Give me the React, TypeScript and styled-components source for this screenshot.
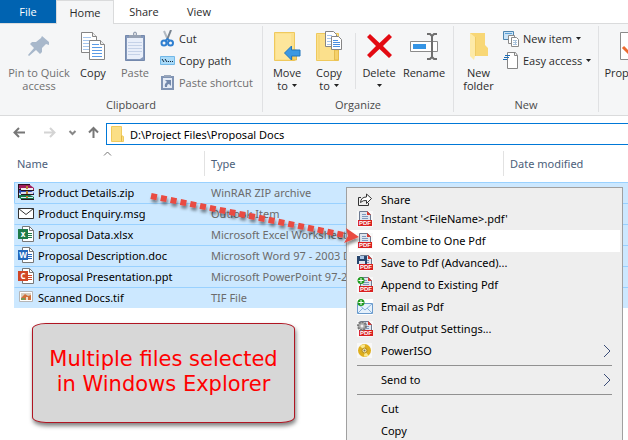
import React from "react";
import styled, { createGlobalStyle, css } from "styled-components";

const GlobalStyle = createGlobalStyle`
  *, *::before, *::after { box-sizing: border-box; }
  html, body { margin: 0; height: 100%; background: #fff; }
  #root { height: 100%; }
  button, input { font: inherit; color: inherit; }
  svg { display: block; flex: none; }
`;

const listFont = `"Noto Sans", "Open Sans", sans-serif`;

const Window = styled.div`
  position: relative;
  min-height: 100%;
  height: 100vh;
  overflow: hidden;
  display: flex;
  flex-direction: column;
  background: #fff;
  color: #000;
  font-family: "Open Sans", "Noto Sans", sans-serif;
  font-size: 11px;
  line-height: 13px;
`;

/* ---------- tabs ---------- */

const TabBar = styled.nav`
  display: flex;
  height: 24px;
  flex: none;
  border-bottom: 1px solid #dadbdc;
`;

const Tab = styled.button<{ $kind?: "file" | "active"; $width: number }>`
  width: ${(p) => p.$width}px;
  height: 23px;
  padding: 0;
  border: 0;
  background: transparent;
  color: #2b2b2b;
  ${(p) => p.$kind === "file" && css`
    background: #0063b1;
    color: #fff;
  `}
  ${(p) => p.$kind === "active" && css`
    height: 24px;
    padding-bottom: 1px;
    background: #f5f6f7;
    border: 1px solid #dadbdc;
    border-bottom: 0;
  `}
`;

/* ---------- ribbon ---------- */

const Ribbon = styled.div`
  display: flex;
  flex: none;
  height: 92px;
  overflow: hidden;
  padding: 2px 0 3px;
  background: #f5f6f7;
  border-bottom: 1px solid #dadbdc;
  color: #2b2b2b;
`;

const Group = styled.section<{ $width: number }>`
  display: flex;
  flex-direction: column;
  flex: none;
  width: ${(p) => p.$width}px;
  border-right: 1px solid #e0e1e3;
`;

const GroupTools = styled.div<{ $indent?: number }>`
  display: flex;
  flex: 1;
  padding-left: ${(p) => p.$indent ?? 0}px;
`;

const GroupLabel = styled.div`
  height: 14px;
  text-align: center;
  color: #4a4a4a;
`;

const BigButton = styled.button<{ $width: number }>`
  display: flex;
  flex-direction: column;
  align-items: center;
  flex: none;
  width: ${(p) => p.$width}px;
  padding: 5px 0 0;
  border: 0;
  background: transparent;
  white-space: nowrap;
  &:disabled { color: #6f6f6f; }
`;

const BigIcon = styled.span`
  display: flex;
  align-items: center;
  justify-content: center;
  height: 30px;
  margin-bottom: 5px;
`;

const Line = styled.span`
  display: flex;
  align-items: center;
  justify-content: center;
  gap: 4px;
  height: 13px;
`;

const ToolDivider = styled.span`
  width: 1px;
  height: 56px;
  margin: 7px 0 0 5px;
  background: #e0e1e3;
`;

const SmallColumn = styled.div<{ $indent?: number }>`
  display: flex;
  flex-direction: column;
  align-items: flex-start;
  padding: 2px 0 0 ${(p) => p.$indent ?? 0}px;
`;

const SmallButton = styled.button`
  display: flex;
  align-items: center;
  gap: 4px;
  height: 22px;
  padding: 0 0 1px;
  border: 0;
  background: transparent;
  white-space: nowrap;
  &:disabled { color: #6f6f6f; }
`;

const Down = () => (
  <svg width="5" height="3" viewBox="0 0 5 3"><path d="M0 0h5L2.500 3z" fill="#222" /></svg>
);

const PinIcon = () => (
  <svg width="22" height="22" viewBox="0 0 22 22">
    <path d="M14 1l7 6v3l-3-1-4 4v4l-2 2-4-4-7 6-1-1 6-7-4-4 2-2h4l5-4z" fill="#a8b8cb" />
  </svg>
);

const SheetsIcon = () => (
  <svg width="26" height="30" viewBox="0 0 26 30">
    <path d="M1.500 1.500h11l4 4v16h-15z" fill="#fff" stroke="#858585" />
    <path d="M12.500 1.500v4h4" fill="#eee" stroke="#858585" />
    <path d="M3 6.500h8M3 9.500h11M3 12.500h7M3 15.500h7M3 18.500h7" stroke="#a5c6ee" />
    <path d="M9.500 9.500h11l4 4v15h-15z" fill="#fff" stroke="#858585" />
    <path d="M20.500 9.500v4h4" fill="#eee" stroke="#858585" />
    <path d="M12 13.500h7M12 16.500h10M12 19.500h10M12 22.500h10M12 25.500h10" stroke="#5a9be6" />
  </svg>
);

const ClipboardIcon = () => (
  <svg width="20" height="30" viewBox="0 0 20 30">
    <path d="M.5 4.500h19v25H.5z" fill="#8599bb" stroke="#7489ad" />
    <path d="M2 7h16v19l-3 2H2z" fill="#e9effa" />
    <path d="M3 11.500h14M3 14.500h14M3 17.500h14M3 20.500h14M3 23.500h12" stroke="#c5d2e8" />
    <path d="M4 7V4h4V2q2-3 4 0v2h4v3z" fill="#97a2b3" />
    <circle cx="10" cy="3" r="1" fill="#eee" />
  </svg>
);

const CutIcon = () => (
  <svg width="15" height="17" viewBox="0 0 15 17" fill="none">
    <path d="M4 1l4 9" stroke="#b3bac2" strokeWidth="2" />
    <path d="M11 0L7 10" stroke="#77828e" strokeWidth="2" />
    <ellipse cx="4" cy="13" rx="2.500" ry="2.500" stroke="#2f7fd0" strokeWidth="2" />
    <ellipse cx="10.500" cy="13" rx="2.500" ry="2.500" stroke="#2f7fd0" strokeWidth="2" />
    <path d="M5 11l2.500-2L10 11" stroke="#2f7fd0" strokeWidth="2" />
  </svg>
);

const CopyPathIcon = () => (
  <svg width="15" height="9" viewBox="0 0 15 9">
    <path d="M.5.5h14v8H.5z" fill="#a9daf8" stroke="#72b8e8" />
    <path d="M2 3l2 3M5 3l2 3" stroke="#14283c" />
    <path d="M8 5h1v1H8zM10 5h1v1h-1zM12 5h1v1h-1z" fill="#14283c" />
  </svg>
);

const PasteShortcutIcon = () => (
  <svg width="15" height="17" viewBox="0 0 15 17">
    <path d="M2 3h11v12H2z" fill="#e4ebf6" stroke="#8094b4" strokeWidth="2" />
    <path d="M4 3V1h7v2z" fill="#98a6bb" />
    <path d="M5 6h6v6L9 10q-2 0-2 3H5q-1-3 2-5z" fill="#7389ac" />
  </svg>
);

const MoveIcon = () => (
  <svg width="28" height="29" viewBox="0 0 28 29">
    <path d="M1.500.5h20v28h-20z" fill="#fbe08c" stroke="#efc95d" />
    <path d="M3 2h15v25H3z" fill="#fde69b" />
    <path d="M19.500 18v10h4V18z" fill="#f5d06a" stroke="#e5bb4c" />
    <path d="M11.500 21l7-7v4h8.500v6h-8.500v4z" fill="#3b98e3" stroke="#2377bd" />
  </svg>
);

const CopyToIcon = () => (
  <svg width="28" height="31" viewBox="0 0 28 31">
    <path d="M1.500 2.500h22v27h-22z" fill="#fbe08c" stroke="#efc95d" />
    <path d="M4 4v24" stroke="#f3d271" />
    <path d="M19.500 19v10h4V19z" fill="#f5d06a" stroke="#e5bb4c" />
    <path d="M10.500.5h8l3 3v12h-11z" fill="#fff" stroke="#858585" />
    <path d="M12 4.500h5M12 7.500h5M12 10.500h5M12 13.500h5" stroke="#a5c6ee" />
    <path d="M16.500 5.500h7l3 3v10h-10z" fill="#fff" stroke="#858585" />
    <path d="M18 9.500h5M18 11.500h7M18 13.500h7M18 15.500h7" stroke="#4a8fe0" />
  </svg>
);

const DeleteIcon = () => (
  <svg width="25" height="26" viewBox="0 0 25 26">
    <path d="M3 1l9.500 9L22 1l3 3-9 9 9 9-3 3-9.500-9L3 25l-3-3 9-9-9-9z" fill="#e30a12" />
  </svg>
);

const RenameIcon = () => (
  <svg width="28" height="27" viewBox="0 0 28 27">
    <path d="M.5 8.500h27v10H.5z" fill="#fff" stroke="#8b8b8b" />
    <path d="M3 11h13v5H3z" fill="#3594e4" />
    <path d="M17 1h3l2 2 2-2h3M17 26h3l2-2 2 2h3M22 3v21" fill="none" stroke="#6f6f6f" strokeWidth="2" />
  </svg>
);

const NewFolderIcon = () => (
  <svg width="20" height="28" viewBox="0 0 20 28">
    <path d="M1 1h15v12l3 3v8H1z" fill="#f8d776" />
    <path d="M1 1l5 4v19l-1 4-4-4z" fill="#fdeaa8" />
    <path d="M6.500 5v19" stroke="#efcb66" />
  </svg>
);

const NewItemIcon = () => (
  <svg width="16" height="16" viewBox="0 0 16 16">
    <path d="M.5.5h10v8H.5z" fill="#cbe4f7" stroke="#4f86b0" />
    <path d="M2 2.500h7" stroke="#5ba0d6" />
    <path d="M5.500 4.500h6v8h-6z" fill="#fff" stroke="#8a8a8a" />
    <path d="M8.500 6.500h5l2 2v7h-7z" fill="#fff" stroke="#8a8a8a" />
    <path d="M10 9.500h4M10 11.500h4M10 13.500h4M12.500 9v5" stroke="#a9c3dc" />
  </svg>
);

const EasyAccessIcon = () => (
  <svg width="16" height="17" viewBox="0 0 16 17">
    <path d="M4.500.5h8l2 3v13h-10z" fill="#fff" stroke="#858585" />
    <path d="M11.500.5v3h3" fill="none" stroke="#858585" />
    <path d="M2 3.500h5M1 5.500h5M0 7.500h4" stroke="#1d6db6" />
  </svg>
);

const PropertiesIcon = () => (
  <svg width="23" height="28" viewBox="0 0 23 28">
    <path d="M.5.5h16l6 6v21H.5z" fill="#fff" stroke="#8a8a8a" />
    <path d="M3 15l6 6L19 8" fill="none" stroke="#ed6b2f" strokeWidth="3" />
  </svg>
);

/* ---------- address bar ---------- */

const AddressRow = styled.div`
  display: flex;
  flex: none;
  padding-top: 7px;
  height: 29px;
`;

const NavButton = styled.button<{ $width: number }>`
  display: flex;
  align-items: center;
  justify-content: center;
  width: ${(p) => p.$width}px;
  height: 18px;
  padding: 0;
  border: 0;
  background: transparent;
`;

const NavButtons = styled.div`
  display: flex;
  width: 106px;
  padding-left: 4px;
  flex: none;
`;

const AddressBox = styled.label`
  display: flex;
  align-items: center;
  gap: 6px;
  flex: 1;
  height: 22px;
  padding-left: 4px;
  border: 1px solid #0078d7;
  border-right: 0;
`;

const AddressInput = styled.input`
  flex: 1;
  min-width: 0;
  padding: 0;
  border: 0;
  outline: 0;
  background: transparent;
  font-family: ${listFont};
`;

const ArrowIcon = ({ d, color }: { d: string; color: string }) => (
  <svg width="13" height="13" viewBox="0 0 13 13">
    <path d={d} fill="none" stroke={color} strokeWidth="2" />
  </svg>
);

const FolderIcon = () => (
  <svg width="13" height="16" viewBox="0 0 13 16">
    <path d="M.5.5h10v9l2 1v5H.5z" fill="#fbdf86" stroke="#f0cb5d" />
    <path d="M10.500 9.500v6" stroke="#e3b946" />
  </svg>
);

/* ---------- file list ---------- */

const FileTable = styled.table`
  width: calc(100% - 14px);
  margin-left: 14px;
  table-layout: fixed;
  border-collapse: separate;
  border-spacing: 0;
  font-family: ${listFont};
`;

const NameCol = styled.col`width: 190px;`;
const TypeCol = styled.col`width: 299px;`;

const HeadCell = styled.th`
  position: relative;
  height: 37px;
  padding: 0;
  font-weight: 400;
  text-align: left;
  color: #4c607a;
`;

const HeadLabel = styled.div<{ $first?: boolean }>`
  display: flex;
  align-items: center;
  height: 25px;
  padding-left: ${(p) => (p.$first ? 3 : 6)}px;
  border-left: ${(p) => (p.$first ? "0" : "1px solid #e2e2e2")};
  white-space: nowrap;
`;

const SortMark = styled.span`
  position: absolute;
  top: 6px;
  left: 89px;
`;

const FileRow = styled.tr<{ $focused?: boolean }>`
  background: #cce8ff;
  td {
    border-top: 1px solid #99d1ff;
  }
  td:first-child {
    border-left: 1px solid ${(p) => (p.$focused ? "#99d1ff" : "#cce8ff")};
  }
`;

const Cell = styled.td`
  height: 21px;
  padding: 0 0 2px 7px;
  color: #6b6b6b;
  white-space: nowrap;
`;

const NameCell = styled(Cell)`
  padding-left: 3px;
  color: #000;
`;

const FileName = styled.span`
  display: flex;
  align-items: center;
  gap: 4px;
`;

const ZipIcon = () => (
  <svg width="16" height="16" viewBox="0 0 16 16">
    <path d="M0 1h12l4 3v2H3L0 3z" fill="#a01c5c" />
    <path d="M3 4h12v2H3z" fill="#eee" />
    <path d="M0 6h12l4 3v1H3L0 8z" fill="#2d4bb5" />
    <path d="M3 8h12v2H3z" fill="#dde" />
    <path d="M0 11h12l4 2v2H3L0 13z" fill="#177a4a" />
    <path d="M3 13h12v1H3z" fill="#def" />
    <path d="M0 .5h12M0 5.500h3M3 6.500h13M3 10.500h13M3 15.500h13M.5 1v13" stroke="#2b1220" />
    <path d="M8 2h2v3H8zM8 7h2v3H8zM8 12h2v2H8z" fill="#b98535" />
  </svg>
);

const MailIcon = () => (
  <svg width="16" height="16" viewBox="0 0 16 16">
    <path d="M.5 3.500h15v10H.5z" fill="#fff" stroke="#333" />
    <path d="M.5 3.500L8 9.500l7.500-6" fill="none" stroke="#333" />
  </svg>
);

const OfficeIcon = ({ color, letter }: { color: string; letter: string }) => (
  <svg width="16" height="16" viewBox="0 0 16 16">
    <path d="M4.500.5h7l4 4v11h-11z" fill="#fff" stroke="#777" />
    <path d="M11.500.5v4h4" fill="none" stroke="#777" />
    <path d="M10 7.500h4M10 9.500h4M10 11.500h4" stroke={color} />
    <path d="M0 3h10v10H0z" fill={color} />
    <text x="5" y="11" textAnchor="middle" fontFamily="Open Sans" fontWeight="700" fontSize="8" fill="#fff">{letter}</text>
  </svg>
);

const ImageIcon = () => (
  <svg width="16" height="16" viewBox="0 0 16 16">
    <path d="M1.500 2.500h13v10h-13z" fill="#fff" stroke="#b5b5b5" />
    <path d="M3 4h10v7H3z" fill="#d7cfc0" />
    <path d="M3 9l4-4 3 2 3-1v5H3z" fill="#d1703a" />
    <path d="M3 9h4v2H3z" fill="#799b55" />
    <path d="M8 8h2v3H8z" fill="#f3dfc6" />
  </svg>
);

const files = [
  { name: "Product Details.zip", type: "WinRAR ZIP archive", icon: <ZipIcon /> },
  { name: "Product Enquiry.msg", type: "Outlook Item", icon: <MailIcon /> },
  { name: "Proposal Data.xlsx", type: "Microsoft Excel Worksheet", icon: <OfficeIcon color="#1e7b49" letter="x" /> },
  { name: "Proposal Description.doc", type: "Microsoft Word 97 - 2003 Document", icon: <OfficeIcon color="#2368bd" letter="W" /> },
  { name: "Proposal Presentation.ppt", type: "Microsoft PowerPoint 97-2003", icon: <OfficeIcon color="#d04626" letter="C" /> },
  { name: "Scanned Docs.tif", type: "TIF File", icon: <ImageIcon /> },
];

/* ---------- context menu ---------- */

const Menu = styled.div`
  position: absolute;
  top: 187px;
  left: 346px;
  width: 277px;
  padding: 4px 2px;
  border: 1px solid #a0a0a0;
  background: #eee;
  font-family: ${listFont};
`;

const MenuItem = styled.button<{ $active?: boolean; $short?: boolean }>`
  display: flex;
  align-items: center;
  gap: 8px;
  width: 100%;
  height: ${(p) => (p.$short ? 16 : 22)}px;
  padding: 0 9px 0 8px;
  border: 0;
  background: ${(p) => (p.$active ? "#fff" : "transparent")};
  text-align: left;
  white-space: nowrap;
`;

const MenuIcon = styled.span`
  display: flex;
  width: 16px;
  height: 16px;
  flex: none;
`;

const MenuText = styled.span`
  flex: 1;
  padding-bottom: 2px;
`;

const MenuRule = styled.hr`
  height: 1px;
  margin: 3px 8px;
  border: 0;
  background: #919191;
`;

const Chevron = () => (
  <svg width="8" height="14" viewBox="0 0 8 14">
    <path d="M1 1l6 6-6 6" fill="none" stroke="#3b4d78" />
  </svg>
);

const ShareIcon = () => (
  <svg width="16" height="16" viewBox="0 0 16 16">
    <path d="M4 5.500H1.500v8h10V11" fill="none" stroke="#333" />
    <path d="M9.500 2v3Q4 5 3.500 10.500 6 8 9.500 8.500v3L14.500 6.500z" fill="#fff" stroke="#333" />
  </svg>
);

const PdfIcon = ({ badge }: { badge?: "save" | "plus" | "gear" }) => (
  <svg width="16" height="16" viewBox="0 0 16 16">
    <path d="M0 0h16v16H0z" fill="#f8f8f8" />
    <g transform={badge ? "translate(1 0)" : undefined}>
      <path d="M2.500.5h8l3 3v11h-11z" fill="#dfe5ee" stroke="#6d7a90" />
      <path d="M10 0l4 4h-4z" fill="#d93b32" />
      <path d="M5 3.500h4M5 5.500h6M5 7.500h6" stroke="#7c98bd" />
      <path d="M1 9h14v6H1z" fill="#d92020" />
      <text x="8" y="14" textAnchor="middle" fontFamily="Liberation Sans" fontWeight="700" fontSize="6" fill="#fff">PDF</text>
    </g>
    {badge === "save" && (
      <>
        <path d="M0 1h10v8H0z" fill="#27456d" />
        <path d="M3 1h4v3H3z" fill="#a9c6e6" />
        <path d="M2 6h6v3H2z" fill="#d9e4f0" />
      </>
    )}
    {badge === "plus" && <PlusBadge />}
    {badge === "gear" && (
      <>
        <circle cx="5" cy="5" r="4" fill="#aaa" stroke="#777" strokeWidth="2" strokeDasharray="2 1" />
        <circle cx="5" cy="5" r="1.500" fill="#eee" />
      </>
    )}
  </svg>
);

const PlusBadge = () => (
  <>
    <circle cx="4" cy="3.500" r="3.500" fill="#1e9a1e" />
    <path d="M4 1v5M1.500 3.500h5" stroke="#fff" />
  </>
);

const EmailIcon = () => (
  <svg width="16" height="16" viewBox="0 0 16 16">
    <path d="M0 0h16v16H0z" fill="#fff" />
    <path d="M.5 4.500h15v10H.5z" fill="#e5f1fc" stroke="#6b9bcc" />
    <path d="M1 14l5-5M15 14l-5-5M1 5l7 6 7-6" fill="none" stroke="#86b1dc" />
    <PlusBadge />
  </svg>
);

const DiscIcon = () => (
  <svg width="16" height="16" viewBox="0 0 16 16">
    <path d="M0 0h15v15H0z" fill="#f8f8f8" />
    <circle cx="7.500" cy="7.500" r="6.500" fill="#dfae1c" />
    <path d="M7.500 7.500L3 3A6 6 0 0 1 8 1.500zM7.500 7.500l4 5a6 6 0 0 1-4.500 1z" fill="#fbe98c" />
    <circle cx="7.500" cy="7.500" r="2.500" fill="#f6e6a0" stroke="#b08a20" />
    <circle cx="7.500" cy="7.500" r="1" fill="#777" />
  </svg>
);

/* ---------- annotations ---------- */

const PointerArrow = styled.svg`
  position: absolute;
  top: 187px;
  left: 144px;
  pointer-events: none;
`;

const Callout = styled.p`
  position: absolute;
  top: 323px;
  left: 32px;
  width: 263px;
  margin: 0;
  padding: 23px 8px 25px;
  border: 1px solid #b01522;
  border-radius: 14px / 6px;
  background: #d7d7d7;
  box-shadow: 1px 3px 4px rgba(0, 0, 0, 0.5);
  color: #f00;
  font-family: "DejaVu Sans", Verdana, sans-serif;
  font-size: 21px;
  line-height: 25px;
  text-align: center;
`;

export default function App() {
  return (
    <Window>
      <GlobalStyle />
      <TabBar aria-label="Ribbon tabs">
        <Tab $kind="file" $width={56}>File</Tab>
        <Tab $kind="active" $width={58}>Home</Tab>
        <Tab $width={60}>Share</Tab>
        <Tab $width={50}>View</Tab>
      </TabBar>

      <Ribbon>
        <Group $width={263}>
          <GroupTools $indent={4}>
            <BigButton $width={70} disabled>
              <BigIcon><PinIcon /></BigIcon>
              <Line>Pin to Quick</Line>
              <Line>access</Line>
            </BigButton>
            <BigButton $width={38}>
              <BigIcon><SheetsIcon /></BigIcon>
              <Line>Copy</Line>
            </BigButton>
            <BigButton $width={46} disabled>
              <BigIcon><ClipboardIcon /></BigIcon>
              <Line>Paste</Line>
            </BigButton>
            <SmallColumn $indent={2}>
              <SmallButton><CutIcon />Cut</SmallButton>
              <SmallButton><CopyPathIcon />Copy path</SmallButton>
              <SmallButton disabled><PasteShortcutIcon />Paste shortcut</SmallButton>
            </SmallColumn>
          </GroupTools>
          <GroupLabel>Clipboard</GroupLabel>
        </Group>

        <Group $width={191}>
          <GroupTools $indent={3}>
            <BigButton $width={42}>
              <BigIcon><MoveIcon /></BigIcon>
              <Line>Move</Line>
              <Line>to <Down /></Line>
            </BigButton>
            <BigButton $width={42}>
              <BigIcon><CopyToIcon /></BigIcon>
              <Line>Copy</Line>
              <Line>to <Down /></Line>
            </BigButton>
            <ToolDivider />
            <BigButton $width={46}>
              <BigIcon><DeleteIcon /></BigIcon>
              <Line>Delete</Line>
              <Line><Down /></Line>
            </BigButton>
            <BigButton $width={44}>
              <BigIcon><RenameIcon /></BigIcon>
              <Line>Rename</Line>
            </BigButton>
          </GroupTools>
          <GroupLabel>Organize</GroupLabel>
        </Group>

        <Group $width={145}>
          <GroupTools>
            <BigButton $width={49}>
              <BigIcon><NewFolderIcon /></BigIcon>
              <Line>New</Line>
              <Line>folder</Line>
            </BigButton>
            <SmallColumn>
              <SmallButton><NewItemIcon />New item <Down /></SmallButton>
              <SmallButton><EasyAccessIcon />Easy access <Down /></SmallButton>
            </SmallColumn>
          </GroupTools>
          <GroupLabel>New</GroupLabel>
        </Group>

        <BigButton $width={64}>
          <BigIcon><PropertiesIcon /></BigIcon>
          <Line>Properties</Line>
        </BigButton>
      </Ribbon>

      <AddressRow>
        <NavButtons>
          <NavButton $width={30} aria-label="Back"><ArrowIcon d="M12 6.500H2M6 2L1.500 6.500 6 11" color="#777" /></NavButton>
          <NavButton $width={30} aria-label="Forward"><ArrowIcon d="M1 6.500h10M7 2l4.500 4.500L7 11" color="#d4d4d4" /></NavButton>
          <NavButton $width={16} aria-label="Recent locations"><ArrowIcon d="M3.500 5l3 3 3-3" color="#888" /></NavButton>
          <NavButton $width={26} aria-label="Up"><ArrowIcon d="M6.500 12V2M2 6.500L6.500 2 11 6.500" color="#777" /></NavButton>
        </NavButtons>
        <AddressBox>
          <FolderIcon />
          <AddressInput aria-label="Address" defaultValue="D:\Project Files\Proposal Docs" />
        </AddressBox>
      </AddressRow>

      <FileTable>
        <colgroup>
          <NameCol />
          <TypeCol />
          <col />
        </colgroup>
        <thead>
          <tr>
            <HeadCell>
              <SortMark>
                <svg width="9" height="5" viewBox="0 0 9 5"><path d="M1 4.500l3.500-3.500L8 4.500" fill="none" stroke="#777" /></svg>
              </SortMark>
              <HeadLabel $first>Name</HeadLabel>
            </HeadCell>
            <HeadCell><HeadLabel>Type</HeadLabel></HeadCell>
            <HeadCell><HeadLabel>Date modified</HeadLabel></HeadCell>
          </tr>
        </thead>
        <tbody>
          {files.map((f, i) => (
            <FileRow key={f.name} $focused={i === 0}>
              <NameCell><FileName>{f.icon}{f.name}</FileName></NameCell>
              <Cell>{f.type}</Cell>
              <Cell />
            </FileRow>
          ))}
        </tbody>
      </FileTable>

      <Menu role="menu">
        <MenuItem role="menuitem" $short><MenuIcon><ShareIcon /></MenuIcon><MenuText>Share</MenuText></MenuItem>
        <MenuItem role="menuitem"><MenuIcon><PdfIcon /></MenuIcon><MenuText>Instant '&lt;FileName&gt;.pdf'</MenuText></MenuItem>
        <MenuItem role="menuitem" $active><MenuIcon><PdfIcon /></MenuIcon><MenuText>Combine to One Pdf</MenuText></MenuItem>
        <MenuItem role="menuitem"><MenuIcon><PdfIcon badge="save" /></MenuIcon><MenuText>Save to Pdf (Advanced)...</MenuText></MenuItem>
        <MenuItem role="menuitem"><MenuIcon><PdfIcon badge="plus" /></MenuIcon><MenuText>Append to Existing Pdf</MenuText></MenuItem>
        <MenuItem role="menuitem"><MenuIcon><EmailIcon /></MenuIcon><MenuText>Email as Pdf</MenuText></MenuItem>
        <MenuItem role="menuitem"><MenuIcon><PdfIcon badge="gear" /></MenuIcon><MenuText>Pdf Output Settings...</MenuText></MenuItem>
        <MenuItem role="menuitem"><MenuIcon><DiscIcon /></MenuIcon><MenuText>PowerISO</MenuText><Chevron /></MenuItem>
        <MenuRule />
        <MenuItem role="menuitem"><MenuIcon /><MenuText>Send to</MenuText><Chevron /></MenuItem>
        <MenuRule />
        <MenuItem role="menuitem"><MenuIcon /><MenuText>Cut</MenuText></MenuItem>
        <MenuItem role="menuitem"><MenuIcon /><MenuText>Copy</MenuText></MenuItem>
      </Menu>

      <PointerArrow width="220" height="62" viewBox="0 0 220 62" aria-hidden="true">
        <defs>
          <filter id="arrow-shadow" x="-10%" y="-20%" width="120%" height="160%">
            <feDropShadow dx="1" dy="3" stdDeviation="1.500" floodColor="#000" floodOpacity="0.45" />
          </filter>
        </defs>
        <g filter="url(#arrow-shadow)">
          <path d="M7 9L200 48" stroke="#e94b42" strokeWidth="6" strokeDasharray="6 4" />
          <path d="M202 41l13 9-15 6 4-7z" fill="#e94b42" />
        </g>
      </PointerArrow>

      <Callout>Multiple files selected<br />in Windows Explorer</Callout>
    </Window>
  );
}
